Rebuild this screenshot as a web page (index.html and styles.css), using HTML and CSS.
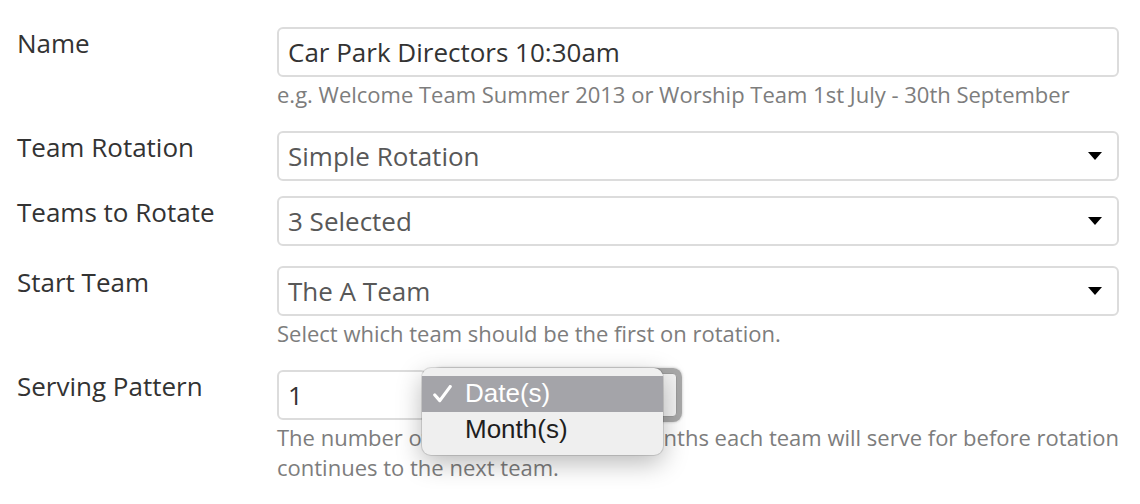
FILE: index.html
```html
<!DOCTYPE html>
<html lang="en">
<head>
<meta charset="utf-8">
<title>Team Rotation</title>
<link rel="stylesheet" href="styles.css">
</head>
<body>
<form class="form">
  <div class="row">
    <label class="label">Name</label>
    <div class="field">
      <div class="control text-dark">Car Park Directors 10:30am</div>
      <p class="help">e.g. Welcome Team Summer 2013 or Worship Team 1st July - 30th September</p>
    </div>
  </div>

  <div class="row">
    <label class="label">Team Rotation</label>
    <div class="field">
      <div class="control select">Simple Rotation<span class="caret"></span></div>
    </div>
  </div>

  <div class="row row-wide">
    <label class="label">Teams to Rotate</label>
    <div class="field">
      <div class="control select">3 Selected<span class="caret"></span></div>
    </div>
  </div>

  <div class="row">
    <label class="label">Start Team</label>
    <div class="field">
      <div class="control select">The A Team<span class="caret"></span></div>
      <p class="help">Select which team should be the first on rotation.</p>
    </div>
  </div>

  <div class="row">
    <label class="label">Serving Pattern</label>
    <div class="field">
      <div class="pattern">
        <div class="control text-dark number">1</div>
        <div class="native-select">Date(s)</div>
        <div class="popup">
          <div class="option selected"><svg class="check" width="19" height="18" viewBox="0 0 19 18"><polyline points="1.8,10 6.8,15.6 17.2,1.6" fill="none" stroke="#ffffff" stroke-width="3.2" stroke-linecap="round" stroke-linejoin="round"/></svg>Date(s)</div>
          <div class="option">Month(s)</div>
        </div>
      </div>
      <p class="help">The number of individual dates or months each team will serve for before rotation continues to the next team.</p>
    </div>
  </div>
</form>
</body>
</html>
```

FILE: styles.css
```css
html, body {
  margin: 0;
  padding: 0;
  background: #ffffff;
}

body {
  font-family: "Open Sans", "Liberation Sans", sans-serif;
  color: #333333;
}

.form {
  padding-top: 27px;
  display: flex;
  flex-direction: column;
  gap: 15px;
}

.row {
  display: grid;
  grid-template-columns: 277px 842px;
  align-items: start;
}

.row-wide {
  margin-bottom: 5px;
}

.label {
  padding-left: 17px;
  font-size: 26px;
  line-height: 32px;
  color: #333333;
}

.field {
  display: flex;
  flex-direction: column;
  position: relative;
}

.control {
  box-sizing: border-box;
  height: 50px;
  border: 2px solid #dcdcdc;
  border-radius: 6px;
  padding: 0 40px 0 9px;
  font-size: 26px;
  line-height: 46px;
  color: #585858;
  background: #ffffff;
  position: relative;
  white-space: nowrap;
}

.text-dark {
  color: #333333;
}

.caret {
  position: absolute;
  right: 15px;
  top: 19px;
  width: 0;
  height: 0;
  border-left: 7px solid transparent;
  border-right: 7px solid transparent;
  border-top: 8px solid #000000;
}

.help {
  margin: 2px 0 7px 0;
  font-size: 22px;
  line-height: 30px;
  color: #7d7d7d;
}

.pattern {
  display: flex;
  align-items: center;
  gap: 10px;
  position: relative;
  height: 50px;
}

.number {
  width: 150px;
  flex: none;
}

.native-select {
  box-sizing: border-box;
  width: 240px;
  height: 44px;
  border: 1px solid #9c9c9c;
  border-radius: 4px;
  background: #f3f3f3;
  box-shadow: 0 0 0 5px rgba(150, 150, 150, 0.75), 0 0 2px 6px rgba(150, 150, 150, 0.3);
  font-family: "Liberation Sans", sans-serif;
  font-size: 24px;
  line-height: 42px;
  padding-left: 12px;
  color: #222222;
}

.popup {
  position: absolute;
  left: 145px;
  top: -2px;
  width: 241px;
  box-sizing: border-box;
  padding: 8px 0 7px 0;
  background: #efefef;
  border-radius: 9px;
  box-shadow: 0 0 0 1px rgba(0, 0, 0, 0.12), 0 8px 26px rgba(0, 0, 0, 0.28);
  font-family: "Liberation Sans", "DejaVu Sans", sans-serif;
  font-size: 26px;
}

.option {
  height: 36px;
  line-height: 35px;
  padding-left: 43px;
  position: relative;
  color: #1e1e1e;
}

.option.selected {
  background: #a4a4a9;
  color: #ffffff;
}

.check {
  position: absolute;
  left: 11px;
  top: 9px;
}
```
